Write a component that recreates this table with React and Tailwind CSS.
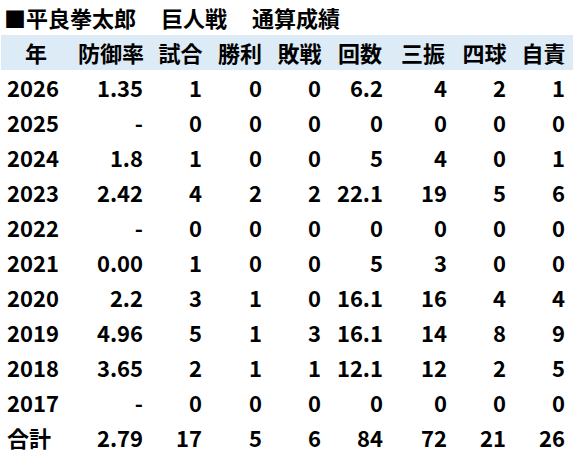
const cols = ['年', '防御率', '試合', '勝利', '敗戦', '回数', '三振', '四球', '自責']

const rows = [
  ['2026', '1.35', '1', '0', '0', '6.2', '4', '2', '1'],
  ['2025', '-', '0', '0', '0', '0', '0', '0', '0'],
  ['2024', '1.8', '1', '0', '0', '5', '4', '0', '1'],
  ['2023', '2.42', '4', '2', '2', '22.1', '19', '5', '6'],
  ['2022', '-', '0', '0', '0', '0', '0', '0', '0'],
  ['2021', '0.00', '1', '0', '0', '5', '3', '0', '0'],
  ['2020', '2.2', '3', '1', '0', '16.1', '16', '4', '4'],
  ['2019', '4.96', '5', '1', '3', '16.1', '14', '8', '9'],
  ['2018', '3.65', '2', '1', '1', '12.1', '12', '2', '5'],
  ['2017', '-', '0', '0', '0', '0', '0', '0', '0'],
  ['合計', '2.79', '17', '5', '6', '84', '72', '21', '26'],
]

const grid = 'grid grid-cols-[70px_80px_59px_60px_59px_62px_64px_59px_59px]'

export default function App() {
  return (
    <div
      className="w-[573px] h-[458px] bg-white text-black font-bold text-[22px] leading-[35px]"
      style={{ fontFamily: '"Noto Sans CJK JP", "Noto Sans", sans-serif' }}
    >
      {/* Title */}
      <div className="h-[35px] pl-[4px] flex whitespace-nowrap">
        <span>■平良拳太郎</span>
        <span className="ml-[25px]">巨人戦</span>
        <span className="ml-[25px]">通算成績</span>
      </div>

      {/* Header */}
      <div className={`${grid} h-[35px] bg-[#ddebf7] ml-[1px]`}>
        {cols.map((c) => (
          <div key={c} className="text-center">{c}</div>
        ))}
      </div>

      {/* Body */}
      {rows.map((r) => (
        <div key={r[0]} className={`${grid} h-[35px]`}>
          {r.map((v, i) => (
            <div key={i} className={i === 0 ? 'pl-[7px]' : 'text-right pr-[7px]'}>
              {v}
            </div>
          ))}
        </div>
      ))}
    </div>
  )
}
